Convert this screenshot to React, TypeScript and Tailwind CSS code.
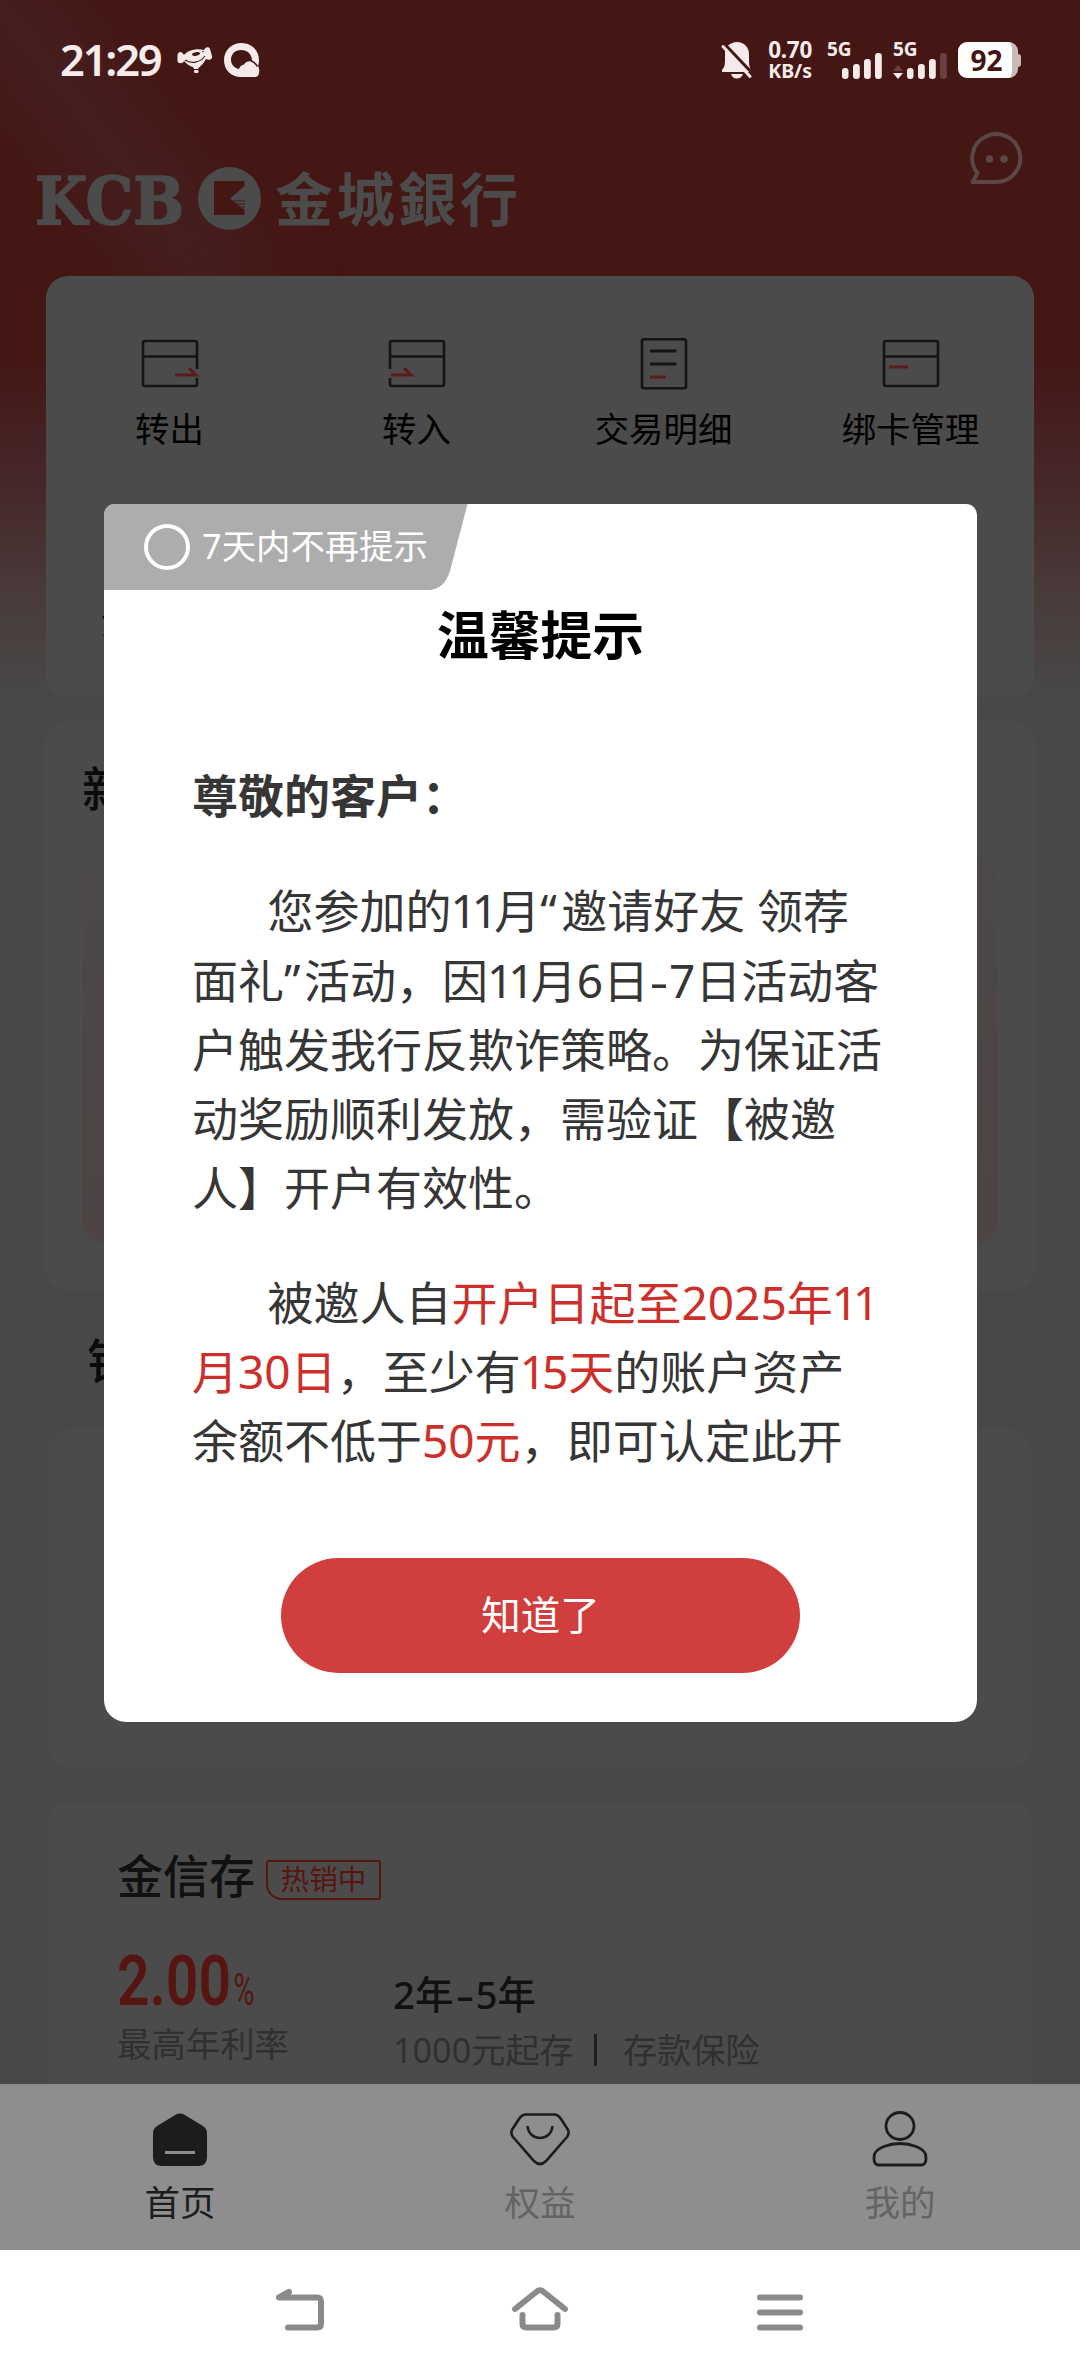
import React from 'react';

const SignalBars = ({ dimLast = false }: { dimLast?: boolean }) => (
  <svg width="41" height="26" viewBox="0 0 41 26" fill="#f5eaea">
    <rect x="0" y="15" width="6.5" height="11" rx="3" />
    <rect x="11" y="11" width="6.8" height="15" rx="3" />
    <rect x="22" y="6" width="6.8" height="20" rx="3" />
    <rect x="33" y="0" width="6.8" height="26" rx="3" fill={dimLast ? '#6c4040' : '#f5eaea'} />
  </svg>
);

const StatusBar = () => (
  <div className="relative flex h-[120px] shrink-0 items-start pl-[60px] pr-[62px] font-semibold text-[#f7ecec]">
    <span className="mt-[29px] w-[117px] whitespace-nowrap text-[43.5px] leading-[60px] tracking-[-2.2px]">21:29</span>
    <svg className="mt-[46px]" width="36" height="28" viewBox="0 0 36 28">
      <path
        d="M7 9 C11 4 20 2 27 4 C28 1 32 0 33 3 L35 10 C36 13 32 15 29 13 C27 17 24 20 22 21.500 L21 23 L17 23 L16 21 C12 20 9 17 7 15 C6 18 1 18 .5 15 L.5 9 C1 5 5 5 7 9Z"
        fill="#f5eaea"
      />
      <ellipse cx="19" cy="8" rx="4" ry="1.7" transform="rotate(-12 19 8)" fill="#441614" />
      <path d="M8 14 C14 18 23 17 28 10" fill="none" stroke="#441614" strokeWidth="1.1" />
      <circle cx="26" cy="5.500" r=".8" fill="#441614" />
      <rect x="17" y="24" width="4.500" height="3" rx="1" fill="#f5eaea" />
    </svg>
    <svg className="ml-[11px] mt-[42px]" width="36" height="36" viewBox="0 0 36 36">
      <path
        fill="#f5eaea"
        fillRule="evenodd"
        d="M17.500 1 C27 1 35 8 35 18 C35 21 34.500 22.500 34 24 C36 27 36 35 31 35 H17 C7 35 0 28 0 18 C0 8 8 1 17.500 1Z M17 8 C11 8 7 12 7 18 C7 22 10 26 15 27 C16 24 18 23 20 22.500 C22 19 26 18.500 28 20 C28.500 13 24 8 17 8Z"
      />
      <path d="M27.500 19 C30 20 32 22 33.500 24.500" stroke="#441614" strokeWidth="1.5" fill="none" />
    </svg>
    <div className="ml-auto flex items-start">
      <svg className="mt-[42px]" width="32" height="37" viewBox="0 0 32 37">
        <path
          d="M16 0 C23 0 28 5 28 12 V19 C28 24 29 27 31 30 L1 30 V28 C4 25 4 21 4 17 V11 C4 5 9 0 16 0Z M10 32 H22 C21 35 18.500 36.500 16 36.500 C13 36.500 11 35 10 32Z"
          fill="#f5eaea"
        />
        <path d="M3.500 2 L32 32" stroke="#441614" strokeWidth="3" />
        <path d="M2 4.500 L29 34.500" stroke="#f5eaea" strokeWidth="3" strokeLinecap="round" />
      </svg>
      <div className="ml-[13px] mt-[38px] w-[46px] text-right font-bold">
        <div className="h-[23px] text-[22.5px] leading-[24px] tracking-[-0.3px]">0.70</div>
        <div className="h-[20px] text-[19.5px] leading-[20px]">KB/s</div>
      </div>
      <div className="ml-[15px] mt-[39px] w-[56px] text-[19px] font-bold leading-[20px]">
        <div className="h-[14px] leading-[20px]">5G</div>
        <div className="flex h-[26px] justify-end"><SignalBars /></div>
      </div>
      <div className="ml-[10px] mt-[39px] w-[55px] text-[19px] font-bold">
        <div className="h-[14px] leading-[20px]">5G</div>
        <div className="flex h-[26px] items-end justify-between">
          <svg width="10" height="14" viewBox="0 0 10 14">
            <path d="M0 6 L5 0 L10 6Z" fill="#6c4040" />
            <path d="M0 8 L5 14 L10 8Z" fill="#f5eaea" />
          </svg>
          <SignalBars dimLast />
        </div>
      </div>
      <div className="ml-[10px] mt-[42px] flex items-center">
        <div className="flex h-[36px] w-[60px] items-center justify-center overflow-hidden rounded-[9px] border-r-[6px] border-[#c9b9b9] bg-white text-[28px] font-bold leading-none text-[#441614]">
          <span className="pl-[3px]">92</span>
        </div>
        <div className="mr-[-3px] h-[13px] w-[3px] rounded-r-full bg-[#c9b9b9]" />
      </div>
    </div>
  </div>
);

const BrandRow = () => (
  <div className="relative flex h-[156px] shrink-0 items-start justify-between pl-[35px] pr-[56px]">
    <svg className="mt-[44px] overflow-visible" width="490" height="70" viewBox="0 0 490 70" fill="#4b4b4b">
      <text
        x="0"
        y="60"
        fontSize="65"
        fontWeight="700"
        fontFamily="'DejaVu Serif', serif"
        stroke="#4b4b4b"
        strokeWidth="1.800"
        textLength="149"
        lengthAdjust="spacingAndGlyphs"
      >
        KCB
      </text>
      <circle cx="194.500" cy="34.500" r="31.500" />
      <path d="M179 17 H209.500 V22 L195 34.500 L209.500 46 V51 H179Z" fill="#441614" />
      <path d="M197 37 H210 M200 40 H210 M203 43 H210 M206 46 H210" stroke="#441614" strokeWidth="1" />
      <text x="240" y="57" fontSize="58" fontWeight="600" fontFamily="'Noto Sans CJK TC', sans-serif" textLength="243" lengthAdjust="spacing">
        金城銀行
      </text>
    </svg>
    <svg className="mt-[11px]" width="55" height="55" viewBox="0 0 55 55" fill="none" stroke="#5a4746" strokeWidth="4">
      <path d="M3.500 51 L8.500 42 A24 24 0 1 1 28 51 H3.500Z" strokeLinejoin="round" />
      <circle cx="20.500" cy="28" r="3.800" fill="#5a4746" stroke="none" />
      <circle cx="35" cy="28" r="3.800" fill="#5a4746" stroke="none" />
    </svg>
  </div>
);

const iconBase = { fill: 'none', stroke: '#141414', strokeWidth: 2.6 };
const RED = '#5c1a1c';

const TransferOut = () => (
  <svg width="60" height="52" viewBox="0 0 60 52" {...iconBase}>
    <path d="M57 31 V5 Q57 3 55 3 H5 Q3 3 3 5 V46 Q3 48 5 48 H55 Q57 48 57 46 V40 M3 18.500 H57" />
    <path d="M35 37 H56 L49 30" stroke={RED} strokeWidth="3" />
  </svg>
);
const TransferIn = () => (
  <svg width="60" height="52" viewBox="0 0 60 52" {...iconBase}>
    <path d="M3 31 V5 Q3 3 5 3 H55 Q57 3 57 5 V46 Q57 48 55 48 H5 Q3 48 3 46 V40 M3 18.500 H57" />
    <path d="M4 37 H24 L17 30" stroke={RED} strokeWidth="3" />
  </svg>
);
const Details = () => (
  <svg width="60" height="52" viewBox="0 0 60 52" {...iconBase}>
    <rect x="8" y="1.300" width="44" height="49" rx="2" />
    <path d="M16 13 H42.500 M16 26 H42.500" strokeWidth="3" />
    <path d="M16 39 H32" stroke={RED} strokeWidth="3" />
  </svg>
);
const Cards = () => (
  <svg width="60" height="52" viewBox="0 0 60 52" {...iconBase}>
    <rect x="3" y="3" width="54" height="45" rx="2" />
    <path d="M3 18.500 H57" />
    <path d="M8 29 H27" stroke={RED} strokeWidth="3" />
  </svg>
);

const actions = [
  { label: '转出', Icon: TransferOut },
  { label: '转入', Icon: TransferIn },
  { label: '交易明细', Icon: Details },
  { label: '绑卡管理', Icon: Cards },
];

const QuickActions = () => (
  <section className="relative mx-[46px] h-[421px] shrink-0 rounded-[22px] bg-[#4b4b4b]">
    <div className="grid grid-cols-4 pt-[62px]">
      {actions.map(({ label, Icon }) => (
        <div key={label} className="flex flex-col items-center">
          <Icon />
          <span className="mt-[14px] text-[34.4px] leading-[50px] text-black">{label}</span>
        </div>
      ))}
    </div>
    <div className="ml-[55px] mt-[143px] text-[32px] leading-[50px] text-black">消</div>
  </section>
);

const Product = () => (
  <section className="mx-[48px] mt-[33px] h-[282px] shrink-0 overflow-hidden rounded-t-[22px] bg-[#4b4b4b] pl-[69px] pt-[43px]">
    <div className="flex items-center">
      <h3 className="text-[46px] font-medium leading-[60px] text-[#111]">金信存</h3>
      <span className="ml-[11px] mt-[9px] flex h-[40px] w-[115px] items-center justify-center rounded-[3px] rounded-bl-[16px] border-[2.5px] border-[#571512] text-[28.6px] leading-none text-[#571512]">
        热销中
      </span>
    </div>
    <div className="mt-[35px] flex">
      <div className="w-[276px]">
        <div className="h-[68px]">
          <svg className="overflow-visible" width="140" height="68" viewBox="0 0 140 68" fill="#571512" fontFamily="Roboto, sans-serif">
            <text x="0" y="65" fontSize="70" fontWeight="600" textLength="114" lengthAdjust="spacingAndGlyphs">2.00</text>
            <text x="116.500" y="65" fontSize="45" fontWeight="400" textLength="21" lengthAdjust="spacingAndGlyphs">%</text>
          </svg>
        </div>
        <div className="mt-[11px] text-[34.4px] leading-[50px] text-[#303030]">最高年利率</div>
      </div>
      <div className="pt-[27px]">
        <div className="text-[38.5px] font-medium leading-[54px] text-[#111]">
          2年<span className="inline-block w-[22px] scale-x-150 text-center">-</span>5年
        </div>
        <div className="mt-[4px] flex items-center text-[34.2px] leading-[50px] text-[#303030]">
          <span>1000元起存</span>
          <span className="ml-[20px] mr-[26px] h-[32px] w-[3px] bg-[#202020]" />
          <span>存款保险</span>
        </div>
      </div>
    </div>
  </section>
);

const TabBar = () => (
  <nav className="grid h-[166px] shrink-0 grid-cols-3 bg-[#8e8e8e] pt-[25px] text-[35.5px] leading-[50px]">
    <div className="flex flex-col items-center text-[#1c1c1c]">
      <svg width="60" height="60" viewBox="0 0 60 60">
        <path d="M26 5.500 Q30 3.500 34 5.500 L53 17 Q57 19.500 57 24 V48 Q57 57 48 57 H12 Q3 57 3 48 V24 Q3 19.500 7 17Z" fill="#1c1c1c" />
        <rect x="15" y="42" width="30" height="3" fill="#8e8e8e" />
      </svg>
      <span className="mt-[8px]">首页</span>
    </div>
    <div className="flex flex-col items-center text-[#646464]">
      <svg width="60" height="60" viewBox="0 0 60 60" fill="none" stroke="#1c1c1c" strokeWidth="2.600">
        <path d="M16 5.500 H44 Q48 5.500 51 10 L57.500 20 Q60 24 57 28 L36 52 Q30 58 24 52 L3 28 Q0 24 2.500 20 L9 10 Q12 5.500 16 5.500Z" />
        <path d="M17.500 17 C19 33 41 33 42.500 17" />
      </svg>
      <span className="mt-[8px]">权益</span>
    </div>
    <div className="flex flex-col items-center text-[#646464]">
      <svg width="60" height="60" viewBox="0 0 60 60" fill="none" stroke="#1c1c1c" strokeWidth="2.800">
        <ellipse cx="30" cy="17" rx="14" ry="13.500" />
        <path d="M4.500 45 C7 39 19 34.500 30 34.500 C41 34.500 53 39 55.500 45 Q57.500 56 51 56 H9 Q2.500 56 4.500 45Z" />
      </svg>
      <span className="mt-[8px]">我的</span>
    </div>
  </nav>
);

const SystemNav = () => (
  <div className="flex h-[126px] shrink-0 items-start justify-center gap-[180px] bg-white pt-[33px]">
    <svg width="60" height="60" viewBox="0 0 60 60" fill="none" stroke="#8a8a8a" strokeWidth="6" strokeLinecap="round" strokeLinejoin="round">
      <path d="M19 9 L9 14.500 H47 Q51 14.500 51 18.500 V40.500 Q51 44.500 47 44.500 H18" />
    </svg>
    <svg width="60" height="60" viewBox="0 0 60 60" fill="none" stroke="#8a8a8a" strokeWidth="6" strokeLinecap="round" strokeLinejoin="round">
      <path d="M5 26 L27.500 8 Q30 6.500 32.500 8 L55 26" />
      <path d="M12.500 32 V40.500 Q12.500 44.500 16.500 44.500 H43.500 Q47.500 44.500 47.500 40.500 V32" />
    </svg>
    <svg width="60" height="60" viewBox="0 0 60 60" stroke="#8a8a8a" strokeWidth="6" strokeLinecap="round">
      <path d="M10 14.500 H50 M10 29.500 H50 M10 44.500 H50" />
    </svg>
  </div>
);

const One = () => <span className="-ml-px tracking-[-4px]">1</span>;
const Hl = ({ children }: { children: React.ReactNode }) => <span className="text-[#cd2f2a]">{children}</span>;

const NoticeDialog = () => (
  <div className="absolute left-[104px] top-[504px] flex h-[1218px] w-[873px] flex-col overflow-hidden rounded-b-[22px] rounded-t-[11px] bg-white">
    <div className="relative h-[86px] w-[364px] shrink-0">
      <svg className="absolute inset-0" width="364" height="86" viewBox="0 0 364 86">
        <path d="M0 0 H363.500 L346 67 Q340 86 324 86 H0Z" fill="#adadad" />
      </svg>
      <div className="relative flex h-[83px] items-center pl-[40px] text-white">
        <span className="mt-[3px] h-[46px] w-[46px] rounded-full border-[4px] border-white" />
        <span className="ml-[12px] whitespace-nowrap text-[34.400px] leading-[50px]">7天内不再提示</span>
      </div>
    </div>
    <h2 className="mt-[10px] text-center text-[51.800px] font-bold leading-[70px] text-black">温馨提示</h2>
    <div className="mt-[91px] whitespace-nowrap pl-[88px] text-[46px] leading-[69.300px] text-[#363636]">
      <p className="font-bold">尊敬的客户：</p>
      <p className="mt-[46px]">
        <span className="pl-[75.500px]">您参加的<One /><One />月</span>
        <span className="inline-block w-[21px]">“</span>邀请好友 领荐
        <br />
        面礼<span className="inline-block w-[20px]">”</span>活动，因<One /><One />月6日
        <span className="inline-block w-[20px] scale-x-125 text-center">-</span>7日活动客
        <br />
        户触发我行反欺诈策略。为保证活
        <br />
        动奖励顺利发放，需验证【被邀
        <br />
        人】开户有效性。
      </p>
      <p className="mt-[45px]">
        <span className="pl-[75.500px]">被邀人自</span>
        <Hl>开户日起至2025年<One /><One /></Hl>
        <br />
        <Hl>月30日</Hl>，至少有<Hl><One />5天</Hl>的账户资产
        <br />
        余额不低于<Hl>50元</Hl>，即可认定此开
      </p>
    </div>
    <button className="mx-auto mb-[49px] mt-auto h-[115px] w-[519px] shrink-0 rounded-full bg-[#d03f3d] text-[39.500px] leading-none text-white">
      知道了
    </button>
  </div>
);

export default function App() {
  return (
    <div
      lang="zh-CN"
      className="relative flex h-[2376px] w-[1080px] flex-col overflow-hidden bg-[#484848] font-['Noto_Sans','Noto_Sans_CJK_SC',sans-serif]"
    >
      <div className="absolute inset-x-0 top-0 h-[720px] bg-[linear-gradient(180deg,#441614_0px,#441614_350px,#46282a_490px,#493c3b_600px,#484848_700px)]" />
      <div className="absolute left-[-150px] top-[80px] h-[80px] w-[480px] rotate-[52deg] bg-[#48292c] opacity-60 blur-2xl" />
      <StatusBar />
      <BrandRow />
      <QuickActions />
      <section className="relative mx-[45px] mt-[24px] h-[569px] shrink-0 rounded-[22px] bg-[#4b4b4b] px-[37px] pt-[38px]">
        <h3 className="text-[48px] font-medium leading-[60px] text-[#0b0b0b]">新</h3>
        <div className="mt-[39px] h-[385px] rounded-[22px] bg-[linear-gradient(180deg,#4b4948,#4f4344)]" />
      </section>
      <h3 className="ml-[87px] mt-[41px] shrink-0 text-[48px] font-medium leading-[60px] text-[#0b0b0b]">银</h3>
      <section className="mx-[48px] mt-[38px] h-[340px] shrink-0 rounded-[22px] bg-[#4b4b4b]" />
      <Product />
      <TabBar />
      <SystemNav />
      <NoticeDialog />
    </div>
  );
}
